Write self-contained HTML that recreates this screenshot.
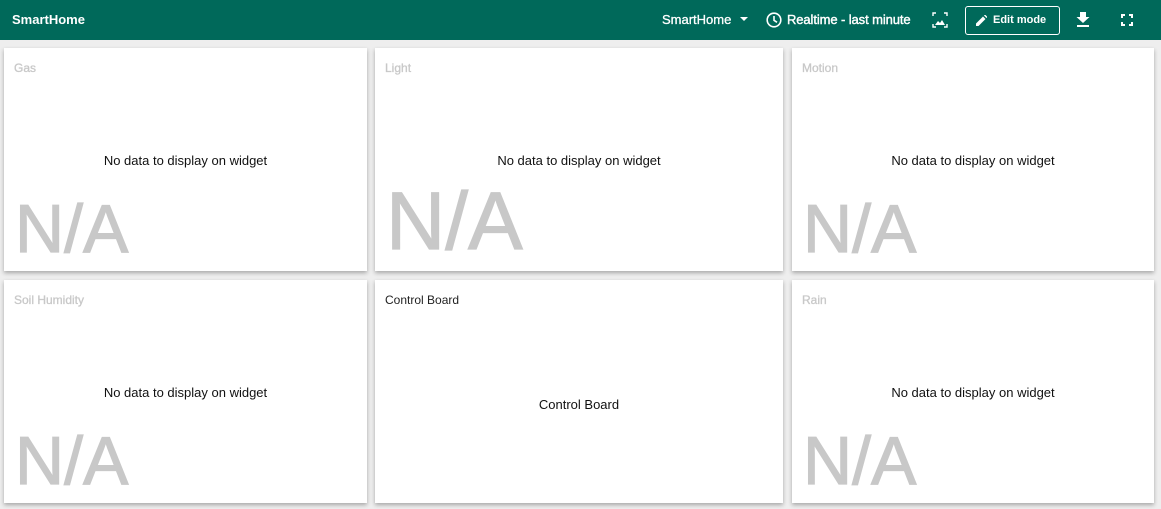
<!DOCTYPE html>
<html><head><style>
body{margin:0;width:1161px;height:509px;background:#eee;font-family:"Liberation Sans",sans-serif;overflow:hidden;position:relative}
.hdr{position:absolute;left:0;top:0;width:1161px;height:40px;background:#00695a;color:#fff}
.hdr span{position:absolute;top:12px;font-size:13px}
.card{position:absolute;background:#fff;box-shadow:0 2px 4px rgba(0,0,0,.3)}
.t{position:absolute;left:10px;top:13px;font-size:12px;color:#c8c8c8;-webkit-text-stroke:.3px #c8c8c8}
.nd{position:absolute;left:0;right:0;top:105px;text-align:center;font-size:13px;color:#111}
.na{position:absolute;left:11px;bottom:8px;font-size:68px;color:#c8c8c8;line-height:1;letter-spacing:0;-webkit-text-stroke:1.2px #c8c8c8}
</style></head><body>
<div class="hdr">
<span style="left:12px;font-weight:bold">SmartHome</span>
<span style="left:662px;-webkit-text-stroke:.3px #fff">SmartHome</span>
<svg style="position:absolute;left:740px;top:17px" width="8" height="5"><path d="M0 0h8L4 4z" fill="#fff"/></svg>
<svg style="position:absolute;left:766px;top:12px" width="16" height="16" viewBox="0 0 16 16"><circle cx="8" cy="8" r="6.8" fill="none" stroke="#fff" stroke-width="1.6"/><path d="M8 4v4.3l3 2" fill="none" stroke="#fff" stroke-width="1.6"/></svg>
<span style="left:787px;-webkit-text-stroke:.4px #fff;letter-spacing:-.1px">Realtime - last minute</span>
<svg style="position:absolute;left:932px;top:12px" width="16" height="16" viewBox="0 0 16 16"><path d="M1 4V1h3M12 1h3v3M15 12v3h-3M4 15H1v-3" fill="none" stroke="#fff" stroke-width="1.4"/><path d="M3 13l3-4 2 2 2-3 3 5z" fill="#fff"/></svg>
<div style="position:absolute;left:965px;top:6px;width:93px;height:27px;border:1px solid #fff;border-radius:3px"></div>
<svg style="position:absolute;left:976px;top:15px" width="11" height="11" viewBox="0 0 11 11"><path d="M0 11V8.5L7 1.5l2.5 2.5-7 7zM8 .5l1-1 2.5 2.5-1 1z" fill="#fff"/></svg>
<span style="left:993px;font-size:11px;top:14px;font-weight:bold">Edit mode</span>
<svg style="position:absolute;left:1076px;top:12px" width="14" height="15" viewBox="0 0 14 15"><path d="M4 0h6v5h3.5L7 11 .5 5H4z M1 13h12v2H1z" fill="#fff"/></svg>
<svg style="position:absolute;left:1121px;top:14px" width="12" height="12" viewBox="0 0 12 12"><path d="M1 4V1h3M8 1h3v3M11 8v3H8M4 11H1V8" fill="none" stroke="#fff" stroke-width="2"/></svg>
</div>
<div class="card" style="left:4px;top:48px;width:363px;height:223px"><div class="t">Gas</div><div class="nd">No data to display on widget</div><div class="na">N/A</div></div>
<div class="card" style="left:375px;top:48px;width:408px;height:223px"><div class="t">Light</div><div class="nd">No data to display on widget</div><div class="na" style="font-size:82px">N/A</div></div>
<div class="card" style="left:792px;top:48px;width:362px;height:223px"><div class="t">Motion</div><div class="nd">No data to display on widget</div><div class="na">N/A</div></div>
<div class="card" style="left:4px;top:280px;width:363px;height:223px"><div class="t">Soil Humidity</div><div class="nd">No data to display on widget</div><div class="na">N/A</div></div>
<div class="card" style="left:375px;top:280px;width:408px;height:223px"><div class="t" style="color:#222;-webkit-text-stroke:0">Control Board</div><div class="nd" style="top:117px">Control Board</div></div>
<div class="card" style="left:792px;top:280px;width:362px;height:223px"><div class="t">Rain</div><div class="nd">No data to display on widget</div><div class="na">N/A</div></div>
</body></html>
